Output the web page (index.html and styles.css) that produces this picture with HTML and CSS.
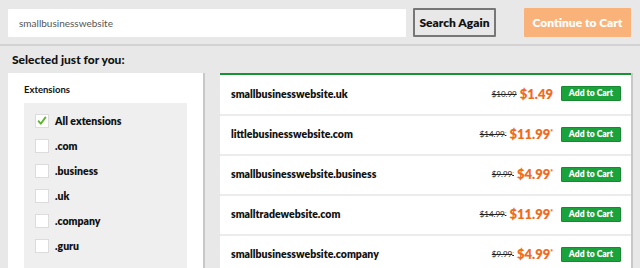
FILE: index.html
```html
<!doctype html>
<html lang="en">
  <head>
    <meta charset="utf-8">
    <title>Domain search</title>
    <link rel="stylesheet" href="styles.css">
  </head>
  <body>
    <header class="topbar">
      <div class="search-box">smallbusinesswebsite</div>
      <button class="btn-search">Search Again</button>
      <button class="btn-continue">Continue to Cart</button>
    </header>

    <h2 class="picked">Selected just for you:</h2>

    <main class="content">
      <aside class="filters">
        <div class="filters-title">Extensions</div>
        <ul class="ext-list">
          <li><span class="check checked"><svg viewBox="0 0 14 14" width="14" height="14"><path d="M3 7.2 L5.6 10.2 L11 2.8" fill="none" stroke="#5cb52d" stroke-width="2.2" stroke-linecap="round" stroke-linejoin="round"/></svg></span>All extensions</li>
          <li><span class="check"></span>.com</li>
          <li><span class="check"></span>.business</li>
          <li><span class="check"></span>.uk</li>
          <li><span class="check"></span>.company</li>
          <li><span class="check"></span>.guru</li>
        </ul>
      </aside>

      <section class="results">
        <div class="row">
          <span class="domain">smallbusinesswebsite.uk</span>
          <span class="old">$10.99</span>
          <span class="price">$1.49</span>
          <button class="btn-add">Add to Cart</button>
        </div>
        <div class="row">
          <span class="domain">littlebusinesswebsite.com</span>
          <span class="old">$14.99<sup>*</sup></span>
          <span class="price">$11.99<sup>*</sup></span>
          <button class="btn-add">Add to Cart</button>
        </div>
        <div class="row">
          <span class="domain">smallbusinesswebsite.business</span>
          <span class="old">$9.99<sup>*</sup></span>
          <span class="price">$4.99<sup>*</sup></span>
          <button class="btn-add">Add to Cart</button>
        </div>
        <div class="row">
          <span class="domain">smalltradewebsite.com</span>
          <span class="old">$14.99<sup>*</sup></span>
          <span class="price">$11.99<sup>*</sup></span>
          <button class="btn-add">Add to Cart</button>
        </div>
        <div class="row">
          <span class="domain">smallbusinesswebsite.company</span>
          <span class="old">$9.99<sup>*</sup></span>
          <span class="price">$4.99<sup>*</sup></span>
          <button class="btn-add">Add to Cart</button>
        </div>
      </section>
    </main>
  </body>
</html>
```

FILE: styles.css
```css
* {
  box-sizing: border-box;
}
body {
  margin: 0;
  background: #e8e8e8;
  font-family: Lato, "Liberation Sans", sans-serif;
  color: #111;
  height: 268px;
  overflow: hidden;
}
.topbar {
  display: flex;
  align-items: flex-start;
  padding: 8px 9px 0 8px;
  border-bottom: 2px solid #d2d2d2;
  height: 46px;
}
.search-box {
  width: 398px;
  height: 28px;
  margin-top: 1px;
  line-height: 28px;
  background: #fff;
  border-radius: 1px;
  padding-left: 11px;
  font-size: 10px;
  color: #555;
}
.btn-search {
  margin-left: 7px;
  width: 83px;
  height: 29px;
  background: #e8e8e8;
  border: 2px solid #777;
  border-radius: 1px;
  font-family: inherit;
  font-weight: 800;
  font-size: 12px;
  color: #111;
  padding: 0;
}
.btn-continue {
  margin-left: auto;
  width: 107px;
  height: 29px;
  background: #fab27b;
  border: none;
  border-radius: 1px;
  color: #fff;
  font-family: inherit;
  font-weight: 800;
  font-size: 12px;
  padding: 0;
}
.picked {
  margin: 0;
  padding: 6px 12px 0;
  font-size: 12px;
  font-weight: 900;
  line-height: 16px;
  height: 27px;
}
.content {
  display: flex;
  gap: 17px;
  padding: 0 9px 0 8px;
}
.filters {
  width: 195px;
  background: #fff;
  padding: 11px 16px 0;
  box-shadow: 2px 0 0 #c8c8c8;
  height: 200px;
}
.filters-title {
  font-size: 9.5px;
  font-weight: 700;
  height: 19px;
  line-height: 12px;
}
.ext-list {
  list-style: none;
  margin: 0;
  padding: 5px 11px;
  background: #efefef;
  height: 170px;
}
.ext-list li {
  display: flex;
  align-items: center;
  height: 25px;
  font-size: 10.5px;
  font-weight: 800;
}
.check {
  width: 14px;
  height: 14px;
  background: #fff;
  border: 1px solid #dcdcdc;
  margin-right: 6px;
  display: flex;
  align-items: center;
  justify-content: center;
}
.results {
  flex: 1;
  background: #fff;
  border-top: 2px solid #199234;
  box-shadow: 2px 0 0 #c8c8c8;
}
.row {
  display: flex;
  align-items: center;
  height: 40px;
  padding: 1px 10px 3px 11px;
  border-bottom: 2px solid #ececec;
}
.row:first-child {
  height: 41px;
}
.domain {
  flex: 1;
  font-size: 10.5px;
  font-weight: 800;
}
.old {
  font-size: 8px;
  text-decoration: line-through;
  color: #222;
  margin-right: 3px;
}
.price {
  font-size: 13px;
  font-weight: 800;
  color: #f26b1d;
  margin-right: 8px;
}
sup {
  font-size: 0.5em;
  vertical-align: 0.6em;
}
.btn-add {
  width: 60px;
  height: 15px;
  background: #1ba33b;
  border: 1px solid #178a31;
  border-radius: 1px;
  color: #fff;
  font-family: inherit;
  font-weight: 800;
  font-size: 8.5px;
  padding: 0;
  line-height: 13px;
}
```
